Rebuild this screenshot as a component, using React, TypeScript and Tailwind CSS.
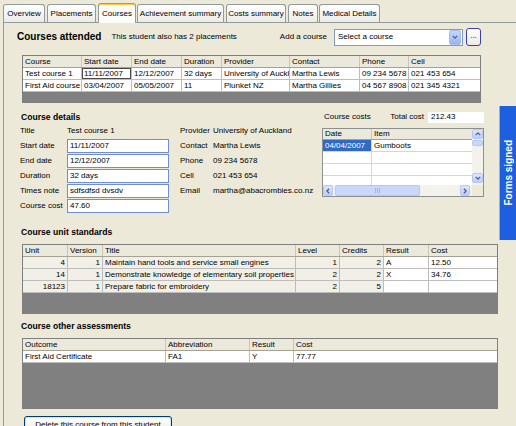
import React from 'react';

type Col = { label: string; w: string; right?: boolean; shade?: boolean };

const tabs = [
  { label: 'Overview', cls: 'w-[42px]' },
  { label: 'Placements', cls: 'ml-[2px] w-[49px]' },
  { label: 'Courses', cls: 'ml-[2px] w-[38px]', active: true },
  { label: 'Achievement summary', cls: 'ml-[1px] w-[87px]' },
  { label: 'Costs summary', cls: 'ml-[2px] w-[60px]' },
  { label: 'Notes', cls: 'ml-[2px] w-[30px]' },
  { label: 'Medical Details', cls: 'ml-[1px] w-[61px]' },
];

const courseCols: Col[] = [
  { label: 'Course', w: 'w-[59px]' },
  { label: 'Start date', w: 'w-[50px]' },
  { label: 'End date', w: 'w-[50px]' },
  { label: 'Duration', w: 'w-[40px]' },
  { label: 'Provider', w: 'w-[68px]' },
  { label: 'Contact', w: 'w-[70px]' },
  { label: 'Phone', w: 'w-[49px]' },
  { label: 'Cell', w: 'w-[71px]' },
];

const courseRows = [
  ['Test course 1', '11/11/2007', '12/12/2007', '32 days', 'University of Auckland', 'Martha Lewis', '09 234 5678', '021 453 654'],
  ['First Aid course', '03/04/2007', '05/05/2007', '11', 'Plunket NZ', 'Martha Gillies', '04 567 8908', '021 345 4321'],
];

const unitCols: Col[] = [
  { label: 'Unit', w: 'w-[45px]', right: true, shade: true },
  { label: 'Version', w: 'w-[35px]', right: true, shade: true },
  { label: 'Title', w: 'w-[193px]', shade: true },
  { label: 'Level', w: 'w-[44px]', right: true, shade: true },
  { label: 'Credits', w: 'w-[44px]', right: true, shade: true },
  { label: 'Result', w: 'w-[45px]' },
  { label: 'Cost', w: 'w-[68px]' },
];

const unitRows = [
  ['4', '1', 'Maintain hand tools and service small engines', '1', '2', 'A', '12.50'],
  ['14', '1', 'Demonstrate knowledge of elementary soil properties', '2', '2', 'X', '34.76'],
  ['18123', '1', 'Prepare fabric for embroidery', '2', '5', '', ''],
];

const otherCols: Col[] = [
  { label: 'Outcome', w: 'w-[143px]' },
  { label: 'Abbreviation', w: 'w-[84px]' },
  { label: 'Result', w: 'w-[44px]' },
  { label: 'Cost', w: 'w-[203px]' },
];

const otherRows = [['First Aid Certificate', 'FA1', 'Y', '77.77']];

function Chev({ dir }: { dir: 'up' | 'down' | 'left' | 'right' }) {
  const rot = { up: 'rotate-180', down: '', left: 'rotate-90', right: '-rotate-90' }[dir];
  return (
    <svg viewBox="0 0 8 8" className={`h-[6px] w-[6px] ${rot}`}>
      <path d="M1 2.5 L4 5.5 L7 2.5" fill="none" stroke="#4D6185" strokeWidth="1.7" />
    </svg>
  );
}

function ScrollBtn({ dir, cls }: { dir: 'up' | 'down' | 'left' | 'right'; cls: string }) {
  return (
    <div className={`flex items-center justify-center rounded-[2px] border border-[#B6C8F2] bg-gradient-to-b from-[#DCE6FD] to-[#BCCFF8] ${cls}`}>
      <Chev dir={dir} />
    </div>
  );
}

function Grid({ cols, rows, fill, focus }: { cols: Col[]; rows: string[][]; fill: string; focus?: [number, number] }) {
  return (
    <div className="ml-[2px] flex w-fit flex-col border border-[#7F7F7F] bg-[#808080]">
      <div className="flex h-[12px] border-b border-[#A5A293] bg-[#EBE8DC]">
        {cols.map((c) => (
          <div
            key={c.label}
            className={`${c.w} flex items-center overflow-hidden whitespace-nowrap border-r border-[#C9C6B6] pl-[2px] last:border-r-0`}
          >
            {c.label}
          </div>
        ))}
      </div>
      {rows.map((r, i) => (
        <div key={i} className="flex h-[12px] border-b border-[#BDBDBD]">
          {cols.map((c, j) => (
            <div
              key={j}
              className={`${c.w} flex items-center overflow-hidden whitespace-nowrap border-r border-[#BDBDBD] px-[2px] last:border-r-0 ${
                c.right ? 'justify-end' : ''
              } ${c.shade ? 'bg-[#F2F0E6]' : 'bg-white'} ${
                focus && focus[0] === i && focus[1] === j ? 'shadow-[inset_0_0_0_1px_#4A4A4A]' : ''
              }`}
            >
              {r[j]}
            </div>
          ))}
        </div>
      ))}
      <div className={fill} />
    </div>
  );
}

function CostsGrid() {
  return (
    <div className="mt-[5px] flex h-[69px] w-[162px] flex-col border border-[#8E8F8F] bg-white">
      <div className="flex h-[56px]">
        <div className="flex w-[149px] flex-col overflow-hidden">
          <div className="flex h-[11px] shrink-0 border-b border-[#A5A293] bg-[#EBE8DC]">
            <div className="flex w-[49px] items-center border-r border-[#C9C6B6] pl-[2px]">Date</div>
            <div className="flex flex-1 items-center pl-[2px]">Item</div>
          </div>
          <div className="flex h-[12px] shrink-0 border-b border-[#D6D6D6]">
            <div className="flex w-[49px] items-center border-r border-[#D6D6D6] bg-[#316AC5] pl-[2px] text-white">04/04/2007</div>
            <div className="flex flex-1 items-center pl-[2px]">Gumboots</div>
          </div>
          {[0, 1, 2].map((i) => (
            <div key={i} className="flex h-[12px] shrink-0 border-b border-[#D6D6D6]">
              <div className="w-[49px] border-r border-[#D6D6D6]" />
              <div className="flex-1" />
            </div>
          ))}
        </div>
        <div className="flex w-[11px] flex-col bg-[#F3F2EC]">
          <ScrollBtn dir="up" cls="h-[10px]" />
          <div className="mt-px h-[6px] rounded-[2px] border border-[#B6C8F2] bg-[#C9D8FA]" />
          <div className="flex-1" />
          <ScrollBtn dir="down" cls="mb-[2px] h-[10px]" />
        </div>
      </div>
      <div className="flex h-[11px]">
        <div className="flex w-[149px] items-stretch bg-[#F3F2EC]">
          <ScrollBtn dir="left" cls="w-[10px]" />
          <div className="ml-[2px] flex w-[85px] items-center justify-center rounded-[2px] border border-[#B6C8F2] bg-[#C9D8FA]">
            <div className="flex gap-px">
              <div className="h-[5px] w-px bg-[#9FB5EA]" />
              <div className="h-[5px] w-px bg-[#9FB5EA]" />
              <div className="h-[5px] w-px bg-[#9FB5EA]" />
            </div>
          </div>
          <div className="flex-1" />
          <ScrollBtn dir="right" cls="mr-[2px] w-[10px]" />
        </div>
        <div className="w-[11px] bg-[#ECE9D8]" />
      </div>
    </div>
  );
}

function Field({ label, value }: { label: string; value: string }) {
  return (
    <div className="flex h-[15px] items-center">
      <div className="w-[47px] whitespace-nowrap">{label}</div>
      <div className="flex h-[14px] w-[102px] items-center border border-[#6F8ED3] bg-white pl-[2px]">{value}</div>
    </div>
  );
}

function Info({ label, value }: { label: string; value: string }) {
  return (
    <div className="flex h-[15px] items-center whitespace-nowrap">
      <div className="w-[33px]">{label}</div>
      <div>{value}</div>
    </div>
  );
}

export default function App() {
  return (
    <div className="h-[426px] w-[516px] overflow-hidden bg-[#ECE9D8] font-['Liberation_Sans',Arial,sans-serif] text-[8px] leading-none text-black">
      <div className="flex h-[22px] items-end pl-[3px]">
        {tabs.map((t) =>
          t.active ? (
            <div
              key={t.label}
              className={`${t.cls} relative z-10 -mb-px flex h-[20px] items-center justify-center rounded-t-[3px] border border-b-0 border-[#919B9C] border-t-[#E68B2C] bg-[#FCFCFA] shadow-[inset_0_1px_0_#FFC73C]`}
            >
              {t.label}
            </div>
          ) : (
            <div
              key={t.label}
              className={`${t.cls} flex h-[18px] items-center justify-center whitespace-nowrap rounded-t-[3px] border border-b-0 border-[#919B9C] bg-gradient-to-b from-white to-[#ECEBE5]`}
            >
              {t.label}
            </div>
          )
        )}
      </div>

      <div className="relative ml-[3px] h-[404px] border-l border-t border-[#919B9C] pl-[16px] pt-[5px]">
        <div className="-ml-[3px] flex h-[18px] w-[464px] items-center">
          <span className="text-[10px] font-bold">Courses attended</span>
          <span className="ml-[10px]">This student also has 2 placements</span>
          <div className="ml-auto flex items-center">
            <span>Add a course</span>
            <div className="ml-[7px] flex h-[17px] w-[129px] items-center border border-[#7F9DB9] bg-white pl-[3px]">
              <span className="flex-1">Select a course</span>
              <div className="mr-px flex h-[15px] w-[12px] items-center justify-center rounded-[2px] border border-[#A9BFEF] bg-gradient-to-b from-[#C6D6FB] to-[#98B5F1]">
                <Chev dir="down" />
              </div>
            </div>
            <div className="ml-[3px] flex h-[18px] w-[15px] items-center justify-center rounded-[3px] border border-[#3A3FA0] bg-gradient-to-b from-white to-[#ECEBE6] pb-[3px]">
              ...
            </div>
          </div>
        </div>

        <div className="mt-[9px]">
          <Grid cols={courseCols} rows={courseRows} fill="h-[10px]" focus={[0, 1]} />
        </div>

        <div className="mt-[8px] flex">
          <div className="w-[302px]">
            <div className="ml-px flex h-[12px] items-center text-[8.6px] font-bold">Course details</div>
            <div className="flex">
              <div className="flex flex-col">
                <div className="flex h-[15px] items-center">
                  <div className="w-[47px]">Title</div>
                  <div>Test course 1</div>
                </div>
                <Field label="Start date" value="11/11/2007" />
                <Field label="End date" value="12/12/2007" />
                <Field label="Duration" value="32 days" />
                <Field label="Times note" value="sdfsdfsd  dvsdv" />
                <Field label="Course cost" value="47.60" />
              </div>
              <div className="ml-[11px] flex flex-col">
                <Info label="Provider" value="University of Auckland" />
                <Info label="Contact" value="Martha Lewis" />
                <Info label="Phone" value="09 234 5678" />
                <Info label="Cell" value="021 453 654" />
                <Info label="Email" value="martha@abacrombies.co.nz" />
              </div>
            </div>
          </div>
          <div className="w-[162px]">
            <div className="flex h-[12px] items-center">
              <span className="ml-[2px]">Course costs</span>
              <span className="ml-auto">Total cost</span>
              <div className="ml-[4px] flex h-[11px] w-[56px] items-center bg-white pl-[3px]">212.43</div>
            </div>
            <CostsGrid />
          </div>
        </div>

        <div className="ml-px mt-[14px] flex h-[11px] items-center text-[8.6px] font-bold">Course unit standards</div>
        <div className="mt-[6px]">
          <Grid cols={unitCols} rows={unitRows} fill="h-[20px]" />
        </div>

        <div className="ml-px mt-[7px] flex h-[11px] items-center text-[8.6px] font-bold">Course other assessments</div>
        <div className="mt-[6px]">
          <Grid cols={otherCols} rows={otherRows} fill="h-[45px]" />
        </div>

        <button className="ml-[4px] mt-[7px] flex h-[17px] w-[148px] items-center justify-center rounded-[3px] border border-[#003C74] bg-gradient-to-b from-white to-[#ECEBE6] shadow-[inset_0_0_0_1px_#CEE3FF]">
          Delete this course from this student
        </button>

        <div className="absolute left-[495px] top-[83px] flex h-[134px] w-[18px] items-center justify-center border-l border-[#8EB0F0] bg-[#1E5FE0]">
          <span className="rotate-180 whitespace-nowrap text-[10px] font-bold text-white [writing-mode:vertical-rl]">
            Forms signed
          </span>
        </div>
      </div>
    </div>
  );
}
